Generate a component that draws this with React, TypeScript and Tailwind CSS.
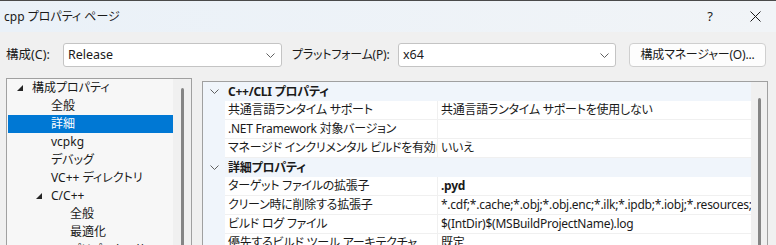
import React from 'react';

const font = "font-['Noto_Sans','Noto_Sans_CJK_JP',sans-serif] [font-feature-settings:'palt']";

function Chevron({ className = '' }: { className?: string }) {
  return (
    <svg width="9" height="5" viewBox="0 0 9 5" className={className}>
      <polyline points="0.5,0.5 4.5,4.5 8.5,0.5" fill="none" stroke="#606060" strokeWidth="1" />
    </svg>
  );
}

function Combo({ value, width }: { value: string; width: string }) {
  return (
    <div className={`${width} h-[24px] bg-white border border-[#c4c4c4] rounded-[3px] flex items-center justify-between pl-[4px] pr-[6px] shrink-0`}>
      <span className="text-[12.5px] text-[#1a1a1a] leading-none">{value}</span>
      <Chevron />
    </div>
  );
}

const tree: { label: string; level: number; open?: boolean; selected?: boolean }[] = [
  { label: '構成プロパティ', level: 0, open: true },
  { label: '全般', level: 1 },
  { label: '詳細', level: 1, selected: true },
  { label: 'vcpkg', level: 1 },
  { label: 'デバッグ', level: 1 },
  { label: 'VC++ ディレクトリ', level: 1 },
  { label: 'C/C++', level: 1, open: true },
  { label: '全般', level: 2 },
  { label: '最適化', level: 2 },
  { label: 'プリプロセッサ', level: 2 },
];

type Row = { category?: string; name?: string; value?: string; bold?: boolean };

const rows: Row[] = [
  { category: 'C++/CLI プロパティ' },
  { name: '共通言語ランタイム サポート', value: '共通言語ランタイム サポートを使用しない' },
  { name: '.NET Framework 対象バージョン', value: '' },
  { name: 'マネージド インクリメンタル ビルドを有効にする', value: 'いいえ' },
  { category: '詳細プロパティ' },
  { name: 'ターゲット ファイルの拡張子', value: '.pyd', bold: true },
  { name: 'クリーン時に削除する拡張子', value: '*.cdf;*.cache;*.obj;*.obj.enc;*.ilk;*.ipdb;*.iobj;*.resources;*.tlb;*.tli;*.tlh;*.tmp' },
  { name: 'ビルド ログ ファイル', value: '$(IntDir)$(MSBuildProjectName).log' },
  { name: '優先するビルド ツール アーキテクチャ', value: '既定' },
];

function Triangle() {
  return (
    <svg width="6" height="6" viewBox="0 0 6 6">
      <polygon points="6,0 6,6 0,6" fill="#262626" />
    </svg>
  );
}

export default function App() {
  return (
    <div className={`w-[776px] h-[245px] overflow-hidden bg-[#f0f0f0] text-[#1a1a1a] ${font}`}>
      {/* タイトルバー */}
      <div className="h-[32px] border-t border-[#4a4a4a] bg-gradient-to-r from-[#eaf1f8] to-[#f1f4f7] flex items-center justify-between pl-[4px]">
        <span className="text-[12px] leading-none">cpp プロパティ ページ</span>
        <div className="flex items-center h-full">
          <span className="w-[20px] text-center text-[13px] leading-none">?</span>
          <svg width="11" height="11" viewBox="0 0 11 11" className="mr-[15px] ml-[30px]">
            <path d="M0.5 0.5 L10.5 10.5 M10.5 0.5 L0.5 10.5" stroke="#1a1a1a" strokeWidth="1" />
          </svg>
        </div>
      </div>

      {/* 構成 / プラットフォーム */}
      <div className="flex items-center pl-[6px] pt-[11px] whitespace-nowrap">
        <span className="w-[57px] shrink-0 text-[12.5px] leading-none">構成(C):</span>
        <Combo value="Release" width="w-[219px]" />
        <span className="w-[116px] shrink-0 pl-[10px] text-[12px] tracking-[-0.2px] leading-none">プラットフォーム(P):</span>
        <Combo value="x64" width="w-[218px]" />
        <button className="ml-[13px] w-[137px] shrink-0 h-[24px] bg-[#fdfdfd] border border-[#cfcfcf] rounded-[4px] text-[12px] tracking-[-0.2px] leading-none">
          構成マネージャー(O)...
        </button>
      </div>

      <div className="flex items-start pl-[6px] pt-[11px]">
        {/* ツリー */}
        <div className="w-[186px] h-[200px] border border-[#a0a0a0] bg-[#f7f7f7] flex shrink-0">
          <div className="flex-1 pl-[1px]">
            {tree.map((t, i) => (
              <div
                key={i}
                className={`h-[18px] flex items-center text-[12px] leading-none whitespace-nowrap ${t.selected ? 'bg-[#0078d4] text-white' : ''}`}
              >
                <span
                  className={`flex justify-end items-center shrink-0 ${
                    t.level === 0 ? 'w-[24px] pr-[9px]' : t.level === 1 ? 'w-[43px] pr-[9px]' : 'w-[62px] pr-[9px]'
                  }`}
                >
                  {t.open && <Triangle />}
                </span>
                <span>{t.label}</span>
              </div>
            ))}
          </div>
          <div className="w-[18px] bg-[#f0f0f0] flex justify-center pt-[9px]">
            <div className="w-[3px] h-full bg-[#858585] rounded-full" />
          </div>
        </div>

        {/* プロパティ グリッド */}
        <div className="ml-[10px] mt-[3px] w-[566px] h-[200px] border border-[#a0a0a0] bg-white flex shrink-0 tracking-[-0.25px]">
          <div className="flex-1 overflow-hidden">
            {rows.map((r, i) =>
              r.category ? (
                <div key={i} className="h-[19px] bg-[#f0f5fb] flex items-center text-[12px] leading-none font-bold">
                  <span className="w-[22px] flex justify-center shrink-0 pl-[1px]">
                    <Chevron />
                  </span>
                  <span className="pl-[3px]">{r.category}</span>
                </div>
              ) : (
                <div key={i} className="h-[19px] flex text-[12px] leading-none">
                  <span className="w-[22px] bg-[#f0f5fb] shrink-0" />
                  <div className="w-[213px] shrink-0 border-b border-r border-[#f0f0f0] flex items-center pl-[3px] overflow-hidden whitespace-nowrap">
                    {r.name}
                  </div>
                  <div
                    className={`flex-1 border-b border-[#f0f0f0] flex items-center pl-[3px] overflow-hidden whitespace-nowrap ${
                      r.bold ? 'font-bold' : ''
                    }`}
                  >
                    {r.value}
                  </div>
                </div>
              )
            )}
          </div>
          <div className="w-[16px] bg-[#f0f0f0] flex justify-center pt-[16px]">
            <div className="w-[3px] h-full bg-[#858585] rounded-full" />
          </div>
        </div>
      </div>
    </div>
  );
}
